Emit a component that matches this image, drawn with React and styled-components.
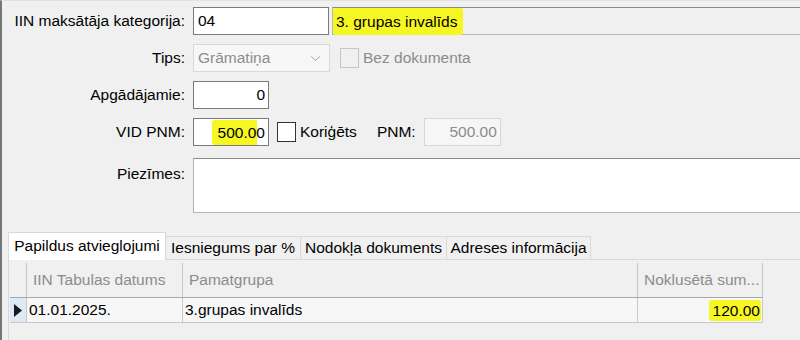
import styled, { createGlobalStyle } from "styled-components";

/* Global ---------------------------*/
const GlobalStyle = createGlobalStyle`
    html, body {
        margin: 0;
        padding: 0;
        background: #f0f0f0;
    }
    body {
        font-family: "Liberation Sans", Arial, sans-serif;
        font-size: 15.5px;
        color: #000;
    }
`;

/* Data ---------------------------*/
const tabs = [
    { title: "Papildus atvieglojumi", width: 158 },
    { title: "Iesniegums par %", width: 135 },
    { title: "Nodokļa dokuments", width: 146 },
    { title: "Adreses informācija", width: 144 },
];

const columns = [
    { title: "IIN Tabulas datums", width: 156 },
    { title: "Pamatgrupa", width: 455 },
    { title: "Noklusētā sum...", width: 125 },
];

const rows = [{ date: "01.01.2025.", group: "3.grupas invalīds", sum: "120.00" }];

/* Components ---------------------------*/
const App = () => {
    return (
        <>
            <GlobalStyle />
            <Window>
                <Form>
                    <Label>IIN maksātāja kategorija:</Label>
                    <Inline>
                        <Field $w={136}>04</Field>
                        <ReadOnly>
                            <Marker>3. grupas invalīds</Marker>
                        </ReadOnly>
                    </Inline>

                    <Label>Tips:</Label>
                    <Inline>
                        <Combo>
                            Grāmatiņa
                            <Chevron viewBox="0 0 12 8">
                                <path d="M1 1.5 L6 6.5 L11 1.5" />
                            </Chevron>
                        </Combo>
                        <Check $disabled $gap={10}>
                            <Box $disabled />
                            Bez dokumenta
                        </Check>
                    </Inline>

                    <Label>Apgādājamie:</Label>
                    <Inline>
                        <Field $w={76} $align="right">0</Field>
                    </Inline>

                    <Label>VID PNM:</Label>
                    <Inline>
                        <Field $w={76} $align="right">
                            <PartMarker>500.00</PartMarker>
                        </Field>
                        <Check $gap={8}>
                            <Box />
                            Koriģēts
                        </Check>
                        <SubLabel>PNM:</SubLabel>
                        <Field $w={77} $align="right" $disabled>500.00</Field>
                    </Inline>

                    <Label $top>Piezīmes:</Label>
                    <Notes />
                </Form>

                <Tabs>
                    <TabBar>
                        {tabs.map((t, i) => (
                            <Tab key={t.title} $w={t.width} $active={i === 0}>
                                {t.title}
                            </Tab>
                        ))}
                    </TabBar>
                    <Panel>
                        <Grid>
                            <HeadRow>
                                <Indicator />
                                {columns.map((c) => (
                                    <HeadCell key={c.title} $w={c.width}>
                                        {c.title}
                                    </HeadCell>
                                ))}
                            </HeadRow>
                            {rows.map((r) => (
                                <DataRow key={r.date}>
                                    <Indicator $current>
                                        <svg width="8" height="13" viewBox="0 0 8 13">
                                            <path d="M0 0 L8 6.5 L0 13 Z" fill="#1a1a1a" />
                                        </svg>
                                    </Indicator>
                                    <Cell $w={columns[0].width}>{r.date}</Cell>
                                    <Cell $w={columns[1].width}>{r.group}</Cell>
                                    <Cell $w={columns[2].width} $align="right">
                                        <Marker $cell>{r.sum}</Marker>
                                    </Cell>
                                </DataRow>
                            ))}
                        </Grid>
                    </Panel>
                </Tabs>
            </Window>
        </>
    );
};

export default App;

/* Styles ---------------------------*/
const Window = styled.div`
    height: 340px;
    overflow: hidden;
    border-left: 2px solid #767676;
    border-top: 1px solid #e2e2e2;
    box-sizing: border-box;
`;

const Form = styled.div`
    display: grid;
    grid-template-columns: 183px 1fr;
    grid-template-rows: 28px 28px 28px 28px 58px;
    column-gap: 8px;
    row-gap: 9px;
    padding-top: 6px;
`;

const Label = styled.div`
    display: flex;
    justify-content: flex-end;
    align-items: ${(p) => (p.$top ? "flex-start" : "center")};
    padding-top: ${(p) => (p.$top ? "10px" : "0")};
    white-space: nowrap;
`;

const Inline = styled.div`
    display: flex;
    align-items: center;
    min-width: 0;
`;

const Field = styled.div`
    box-sizing: border-box;
    width: ${(p) => p.$w}px;
    height: 28px;
    flex-shrink: 0;
    display: flex;
    align-items: center;
    justify-content: ${(p) => (p.$align === "right" ? "flex-end" : "flex-start")};
    padding: 0 3px 0 4px;
    background: ${(p) => (p.$disabled ? "#f6f6f6" : "#ffffff")};
    border: 1px solid ${(p) => (p.$disabled ? "#d6d6d6" : "#7a7a7a")};
    color: ${(p) => (p.$disabled ? "#8c8c8c" : "#000")};
    white-space: nowrap;
`;

const ReadOnly = styled.div`
    box-sizing: border-box;
    flex: 1;
    height: 28px;
    margin-left: 3px;
    display: flex;
    align-items: center;
    border-top: 1px solid #8a8a8a;
    border-bottom: 1px solid #b8b8b8;
    border-left: 1px solid #b8b8b8;
    background: #f0f0f0;
`;

const Marker = styled.span`
    background: #f6f622;
    border-radius: 3px;
    padding: ${(p) => (p.$cell ? "2px 1px 2px 4px" : "5px 5px 5px 3px")};
    line-height: 17px;
`;

const PartMarker = styled.span`
    padding: 3px 0 3px 6px;
    line-height: 19px;
    border-radius: 3px;
    background: linear-gradient(to right, #f6f622 calc(100% - 8px), transparent 0);
`;

const Combo = styled.div`
    box-sizing: border-box;
    width: 137px;
    height: 28px;
    display: flex;
    align-items: center;
    justify-content: space-between;
    padding: 0 8px 0 4px;
    background: #f7f7f7;
    border: 1px solid #d9d9d9;
    color: #8c8c8c;
`;

const Chevron = styled.svg`
    width: 11px;
    height: 7px;
    fill: none;
    stroke: #9a9a9a;
    stroke-width: 1.1;
`;

const Check = styled.label`
    display: flex;
    align-items: center;
    gap: 4px;
    margin-left: ${(p) => p.$gap}px;
    color: ${(p) => (p.$disabled ? "#8c8c8c" : "#000")};
    white-space: nowrap;
`;

const Box = styled.span`
    box-sizing: border-box;
    width: 19px;
    height: 20px;
    background: ${(p) => (p.$disabled ? "#f0f0f0" : "#ffffff")};
    border: 1px solid ${(p) => (p.$disabled ? "#c6c6c6" : "#333333")};
`;

const SubLabel = styled.span`
    width: 47px;
    margin-left: 20px;
`;

const Notes = styled.div`
    box-sizing: border-box;
    height: 55px;
    align-self: end;
    background: #ffffff;
    border-top: 1px solid #8a8a8a;
    border-left: 1px solid #b4b4b4;
    border-bottom: 1px solid #b4b4b4;
`;

const Tabs = styled.div`
    margin-top: 19px;
    margin-left: 6px;
`;

const TabBar = styled.div`
    display: flex;
    align-items: flex-end;
    height: 27px;
`;

const Tab = styled.div`
    box-sizing: border-box;
    width: ${(p) => p.$w}px;
    height: ${(p) => (p.$active ? "28px" : "23px")};
    margin-bottom: ${(p) => (p.$active ? "-1px" : "0")};
    display: flex;
    justify-content: center;
    align-items: center;
    padding-bottom: ${(p) => (p.$active ? "1px" : "0")};
    background: ${(p) => (p.$active ? "#ffffff" : "#f0f0f0")};
    border-top: 1px solid #d9d9d9;
    border-right: 1px solid #d9d9d9;
    border-left: ${(p) => (p.$active ? "1px solid #d9d9d9" : "none")};
    white-space: nowrap;
    position: relative;
    z-index: ${(p) => (p.$active ? 1 : 0)};
`;

const Panel = styled.div`
    border-top: 1px solid #d9d9d9;
    border-left: 1px solid #d9d9d9;
    padding: 3px 0 0 1px;
    height: 100px;
`;

const Grid = styled.div`
    display: inline-flex;
    flex-direction: column;
`;

const HeadRow = styled.div`
    display: flex;
    height: 34px;
    border-bottom: 1px solid #a8a8a8;
`;

const DataRow = styled.div`
    display: flex;
    height: 24px;
    border-bottom: 1px solid #c8c8c8;
`;

const Indicator = styled.div`
    box-sizing: border-box;
    width: 17px;
    flex-shrink: 0;
    display: flex;
    align-items: center;
    justify-content: center;
    background: ${(p) => (p.$current ? "#dce9f6" : "#f0f0f0")};
    border-right: 1px solid #c8c8c8;
`;

const HeadCell = styled.div`
    box-sizing: border-box;
    width: ${(p) => p.$w}px;
    flex-shrink: 0;
    display: flex;
    align-items: center;
    padding: 0 6px;
    color: #8c8c8c;
    border-right: 1px solid #c8c8c8;
    white-space: nowrap;
    overflow: hidden;
`;

const Cell = styled.div`
    box-sizing: border-box;
    width: ${(p) => p.$w}px;
    flex-shrink: 0;
    display: flex;
    align-items: center;
    padding: 0 1px 0 2px;
    justify-content: ${(p) => (p.$align === "right" ? "flex-end" : "flex-start")};
    background: #f7f7f7;
    border-right: 1px solid #c8c8c8;
    white-space: nowrap;
`;
